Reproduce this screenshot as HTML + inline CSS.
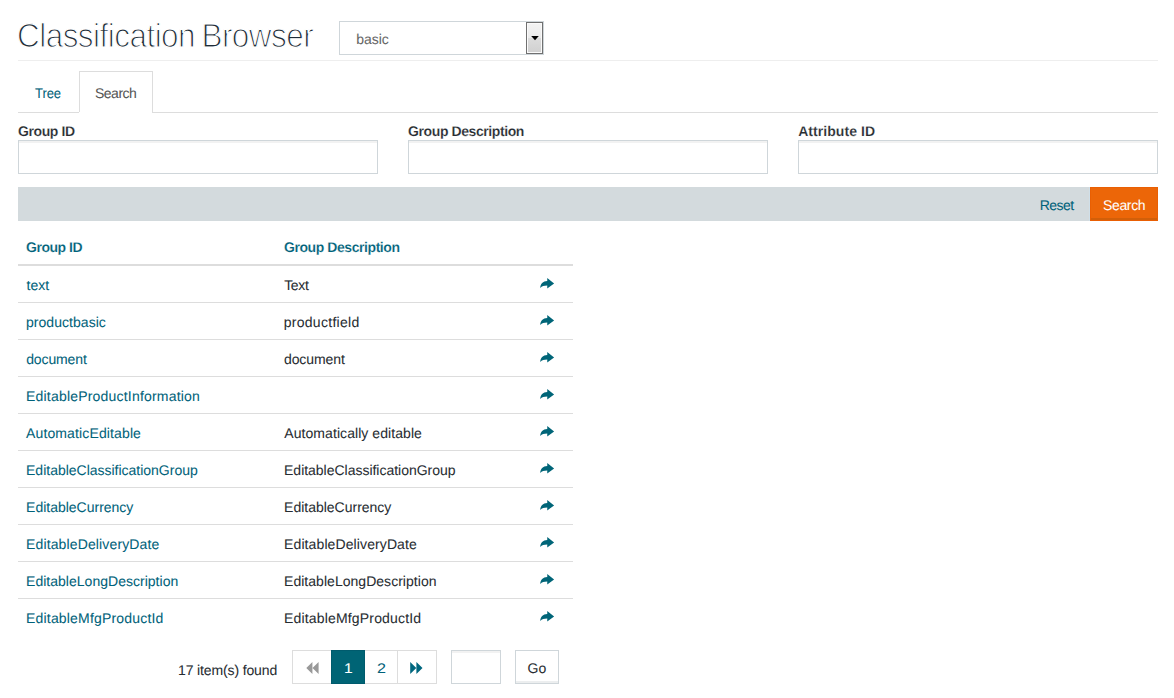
<!DOCTYPE html>
<html lang="en"><head><meta charset="utf-8"><title>Classification Browser</title>
<style>
html,body{margin:0;padding:0;background:#fff;}
body{width:1174px;height:698px;position:relative;overflow:hidden;font-family:"Liberation Sans",sans-serif;font-size:14px;color:#333;}
.t{position:absolute;white-space:pre;line-height:1;margin:0;padding:0;font-weight:400;text-decoration:none;display:block;text-rendering:geometricPrecision;-webkit-text-stroke:0.06px;}
.b{position:absolute;box-sizing:border-box;}
.hr{left:18px;width:1140px;height:1px;background:#eee;}
.inp{height:34px;border:1px solid #cfd6da;background:#fff;box-shadow:inset 0 2px 0 #f2f2f2;}
.rl{left:18px;width:555px;height:1px;background:#ddd;}
svg{position:absolute;overflow:visible;}
</style></head>
<body>
<div class="b hr" style="top:60px"></div>
<div class="b" style="left:339px;top:21px;width:205px;height:34px;border:1px solid #cfd6da;background:#fff"></div>
<div class="b" style="left:526px;top:22px;width:17px;height:32px;border:1px solid #707070;background:linear-gradient(#f3f3f3 0%,#ebebeb 50%,#dcdcdc 51%,#d0d0d0 100%);box-shadow:inset 0 0 0 1px #fafafa"></div>
<svg style="left:530.5px;top:36px" width="8" height="4" viewBox="0 0 8 4"><path d="M0.2 0h7.6L4 4.2z" fill="#000"/></svg>
<div class="b" style="left:18px;top:112px;width:1140px;height:1px;background:#ddd"></div>
<div class="b" style="left:79px;top:71px;width:74px;height:41px;border:1px solid #ddd;border-bottom:0;background:#fff"></div>
<div class="b" style="left:79px;top:112px;width:73px;height:1px;background:#fff"></div>
<div class="b inp" style="left:18px;top:140px;width:360px"></div>
<div class="b inp" style="left:408px;top:140px;width:360px"></div>
<div class="b inp" style="left:798px;top:140px;width:360px"></div>
<div class="b" style="left:18px;top:187px;width:1140px;height:34px;background:#d3dadd"></div>
<div class="b" style="left:1090px;top:187px;width:68px;height:34px;background:#ec6608;border:1px solid #e95f03;box-shadow:inset 0 -2px 0 #d25f09"></div>
<div class="b" style="left:1089px;top:187px;width:1px;height:34px;background:#cfdfe9"></div>
<div class="b" style="left:18px;top:264px;width:555px;height:2px;background:#ddd"></div>
<div class="b rl" style="top:302px"></div>
<div class="b rl" style="top:339px"></div>
<div class="b rl" style="top:376px"></div>
<div class="b rl" style="top:413px"></div>
<div class="b rl" style="top:450px"></div>
<div class="b rl" style="top:487px"></div>
<div class="b rl" style="top:524px"></div>
<div class="b rl" style="top:561px"></div>
<div class="b rl" style="top:598px"></div>
<svg style="left:540px;top:278px" width="15" height="11" viewBox="0 0 15 11"><path d="M7.25 0.1L14.1 5.4L7.25 10.4V7.4C4 7.4 1.8 8 0.3 10C0.3 6 3 3.1 7.25 3.1Z" fill="#006578"/></svg>
<svg style="left:540px;top:315px" width="15" height="11" viewBox="0 0 15 11"><path d="M7.25 0.1L14.1 5.4L7.25 10.4V7.4C4 7.4 1.8 8 0.3 10C0.3 6 3 3.1 7.25 3.1Z" fill="#006578"/></svg>
<svg style="left:540px;top:352px" width="15" height="11" viewBox="0 0 15 11"><path d="M7.25 0.1L14.1 5.4L7.25 10.4V7.4C4 7.4 1.8 8 0.3 10C0.3 6 3 3.1 7.25 3.1Z" fill="#006578"/></svg>
<svg style="left:540px;top:389px" width="15" height="11" viewBox="0 0 15 11"><path d="M7.25 0.1L14.1 5.4L7.25 10.4V7.4C4 7.4 1.8 8 0.3 10C0.3 6 3 3.1 7.25 3.1Z" fill="#006578"/></svg>
<svg style="left:540px;top:426px" width="15" height="11" viewBox="0 0 15 11"><path d="M7.25 0.1L14.1 5.4L7.25 10.4V7.4C4 7.4 1.8 8 0.3 10C0.3 6 3 3.1 7.25 3.1Z" fill="#006578"/></svg>
<svg style="left:540px;top:463px" width="15" height="11" viewBox="0 0 15 11"><path d="M7.25 0.1L14.1 5.4L7.25 10.4V7.4C4 7.4 1.8 8 0.3 10C0.3 6 3 3.1 7.25 3.1Z" fill="#006578"/></svg>
<svg style="left:540px;top:500px" width="15" height="11" viewBox="0 0 15 11"><path d="M7.25 0.1L14.1 5.4L7.25 10.4V7.4C4 7.4 1.8 8 0.3 10C0.3 6 3 3.1 7.25 3.1Z" fill="#006578"/></svg>
<svg style="left:540px;top:537px" width="15" height="11" viewBox="0 0 15 11"><path d="M7.25 0.1L14.1 5.4L7.25 10.4V7.4C4 7.4 1.8 8 0.3 10C0.3 6 3 3.1 7.25 3.1Z" fill="#006578"/></svg>
<svg style="left:540px;top:574px" width="15" height="11" viewBox="0 0 15 11"><path d="M7.25 0.1L14.1 5.4L7.25 10.4V7.4C4 7.4 1.8 8 0.3 10C0.3 6 3 3.1 7.25 3.1Z" fill="#006578"/></svg>
<svg style="left:540px;top:611px" width="15" height="11" viewBox="0 0 15 11"><path d="M7.25 0.1L14.1 5.4L7.25 10.4V7.4C4 7.4 1.8 8 0.3 10C0.3 6 3 3.1 7.25 3.1Z" fill="#006578"/></svg>
<div class="b" style="left:292px;top:650px;width:145px;height:34px;border:1px solid #ddd;background:#fff"></div>
<div class="b" style="left:331px;top:650px;width:34px;height:34px;background:#006475;border:1px solid #005b6d"></div>
<div class="b" style="left:397px;top:650px;width:1px;height:34px;background:#ddd"></div>
<svg style="left:306px;top:662px" width="13" height="12" viewBox="0 0 13 12"><path d="M6.4 0v12L0.3 6zM12.6 0v12L6.5 6z" fill="#999"/></svg>
<svg style="left:410px;top:662px" width="13" height="12" viewBox="0 0 13 12"><path d="M0.2 0v12L6.3 6zM6.4 0v12L12.5 6z" fill="#00677f"/></svg>
<div class="b inp" style="left:451px;top:650px;width:50px"></div>
<div class="b" style="left:515px;top:650px;width:44px;height:34px;border:1px solid #cfd6da;box-shadow:inset 0 -2px 0 #eceeef;background:#fff"></div>
<h1 class="t" style="left:16.95px;top:19.69px;color:#1f2c38;font-size:33.5px;letter-spacing:-0.565px;-webkit-text-stroke:1.2px #fff;transform:scaleX(.94);transform-origin:0 0;word-spacing:-2px;">Classification Browser</h1>
<span class="t" style="left:356.16px;top:32.00px;color:#666;">basic</span>
<a class="t" href="#" style="left:35.04px;top:86.00px;color:#00627a;letter-spacing:-0.097px;transform:scaleX(.93);transform-origin:0 0;">Tree</a>
<a class="t" href="#" style="left:94.93px;top:86.00px;color:#555;letter-spacing:-0.480px;">Search</a>
<label class="t" style="left:17.91px;top:124.00px;color:#272c31;font-weight:700;letter-spacing:-0.385px;-webkit-text-stroke:0.15px #fff;">Group ID</label>
<label class="t" style="left:408.11px;top:124.00px;color:#272c31;font-weight:700;letter-spacing:-0.413px;-webkit-text-stroke:0.15px #fff;">Group Description</label>
<label class="t" style="left:798.14px;top:124.00px;color:#272c31;font-weight:700;letter-spacing:0.064px;-webkit-text-stroke:0.15px #fff;">Attribute ID</label>
<a class="t" href="#" style="left:1039.66px;top:198.00px;color:#00627a;letter-spacing:-0.491px;">Reset</a>
<span class="t" style="left:1103.03px;top:198.00px;color:#fff;letter-spacing:-0.360px;">Search</span>
<span class="t" style="left:26.11px;top:240.00px;color:#00627a;font-weight:700;letter-spacing:-0.485px;-webkit-text-stroke:0.15px #fff;">Group ID</span>
<span class="t" style="left:284.01px;top:240.00px;color:#00627a;font-weight:700;letter-spacing:-0.432px;-webkit-text-stroke:0.15px #fff;">Group Description</span>
<a class="t" href="#" style="left:26.50px;top:278.00px;color:#00627a;letter-spacing:0.059px;">text</a>
<span class="t" style="left:284.23px;top:278.00px;color:#272c31;letter-spacing:-0.356px;">Text</span>
<a class="t" href="#" style="left:25.91px;top:315.00px;color:#00627a;letter-spacing:0.052px;">productbasic</a>
<span class="t" style="left:283.70px;top:315.00px;color:#272c31;letter-spacing:0.285px;">productfield</span>
<a class="t" href="#" style="left:26.18px;top:352.00px;color:#00627a;letter-spacing:-0.115px;">document</a>
<span class="t" style="left:283.98px;top:352.00px;color:#272c31;letter-spacing:-0.087px;">document</span>
<a class="t" href="#" style="left:26.06px;top:389.00px;color:#00627a;letter-spacing:0.197px;">EditableProductInformation</a>
<a class="t" href="#" style="left:26.00px;top:426.00px;color:#00627a;letter-spacing:0.129px;">AutomaticEditable</a>
<span class="t" style="left:284.30px;top:426.00px;color:#272c31;letter-spacing:0.065px;">Automatically editable</span>
<a class="t" href="#" style="left:26.06px;top:463.00px;color:#00627a;letter-spacing:-0.011px;">EditableClassificationGroup</a>
<span class="t" style="left:284.06px;top:463.00px;color:#272c31;letter-spacing:-0.020px;">EditableClassificationGroup</span>
<a class="t" href="#" style="left:26.06px;top:500.00px;color:#00627a;letter-spacing:-0.006px;">EditableCurrency</a>
<span class="t" style="left:284.06px;top:500.00px;color:#272c31;letter-spacing:-0.006px;">EditableCurrency</span>
<a class="t" href="#" style="left:26.06px;top:537.00px;color:#00627a;letter-spacing:0.132px;">EditableDeliveryDate</a>
<span class="t" style="left:284.06px;top:537.00px;color:#272c31;letter-spacing:0.106px;">EditableDeliveryDate</span>
<a class="t" href="#" style="left:26.06px;top:574.00px;color:#00627a;letter-spacing:0.019px;">EditableLongDescription</a>
<span class="t" style="left:284.06px;top:574.00px;color:#272c31;letter-spacing:0.031px;">EditableLongDescription</span>
<a class="t" href="#" style="left:26.06px;top:611.00px;color:#00627a;letter-spacing:0.179px;">EditableMfgProductId</a>
<span class="t" style="left:284.06px;top:611.00px;color:#272c31;letter-spacing:0.166px;">EditableMfgProductId</span>
<span class="t" style="left:178.02px;top:663.00px;color:#272c31;letter-spacing:-0.133px;">17 item(s) found</span>
<span class="t" style="left:343.77px;top:661.00px;color:#fff;transform:scaleX(1.12);transform-origin:0 0;">1</span>
<a class="t" href="#" style="left:376.51px;top:661.00px;color:#00627a;transform:scaleX(1.15);transform-origin:0 0;">2</a>
<span class="t" style="left:527.53px;top:661.00px;color:#272c31;">Go</span>
</body></html>
